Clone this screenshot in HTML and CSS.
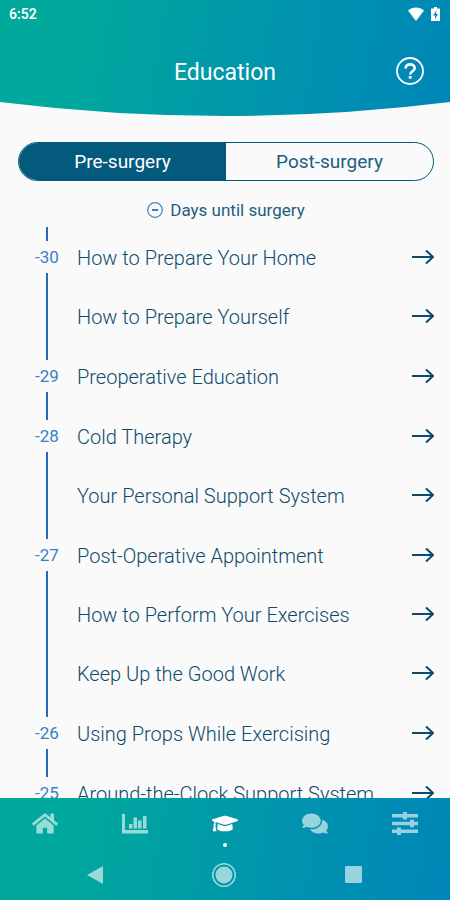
FILE: index.html
```
<!DOCTYPE html>
<html lang="en">
<head>
    <meta charset="utf-8">
    <meta name="viewport" content="width=device-width, initial-scale=1">
    <title>Education</title>
    <link rel="stylesheet" href="styles.css">
</head>
<body>
    <div class="screen">
        <!-- Header -->
        <header class="header">
            <div class="status-bar">
                <span>6:52</span>
                <span class="status-icons">
                    <svg width="18" height="14" viewBox="0 0 18 14"><path fill="#fff" d="M1 3.500C5.500-.5 12.500-.5 17 3.500L9 14z"/></svg>
                    <svg width="9" height="14" viewBox="0 0 9 14"><path fill="#fff" d="M3 0h3v1.500h3V14H0V1.500h3z"/><path fill="#0789b4" d="M5.500 3.500L2 8.500h2V12l3-5H5z"/></svg>
                </span>
            </div>
            <div class="title-bar">
                <h1>Education</h1>
                <button class="help" aria-label="Help">
                    <svg width="28" height="28" viewBox="0 0 28 28" fill="none" stroke="#fff"><circle cx="14" cy="14" r="13" stroke-width="1.800"/><path stroke-width="2.600" d="M9.600 11.400C9.600 6 18.700 6.100 18.700 11.200C18.700 14.300 14.200 14.200 14.200 17.500"/><path stroke-width="2.800" d="M14.200 19v2.700"/></svg>
                </button>
            </div>
            <svg class="curve" viewBox="0 0 450 15" preserveAspectRatio="none"><path d="M0 0Q225 28 450 0V15H0z"/></svg>
        </header>

        <!-- Content -->
        <main class="content">
            <div class="tabs">
                <button class="tab active">Pre-surgery</button>
                <button class="tab">Post-surgery</button>
            </div>

            <button class="days">
                <svg width="16" height="16" viewBox="0 0 16 16" fill="none" stroke="#3a7fc4"><circle cx="8" cy="8" r="7.300" stroke-width="1.200"/><path stroke-width="2" d="M5 8h6"/></svg>
                Days until surgery
            </button>

            <div class="timeline">
                <div class="stub"></div>
                <section class="group">
                    <div class="day">-30</div>
                    <div class="lessons">
                        <a href="#">How to Prepare Your Home <svg class="arrow" viewBox="0 0 22 16"><path d="M0 8h21M14 1.500L21 8l-7 6.500"/></svg></a>
                        <a href="#">How to Prepare Yourself <svg class="arrow" viewBox="0 0 22 16"><path d="M0 8h21M14 1.500L21 8l-7 6.500"/></svg></a>
                    </div>
                </section>
                <section class="group">
                    <div class="day">-29</div>
                    <div class="lessons">
                        <a href="#">Preoperative Education <svg class="arrow" viewBox="0 0 22 16"><path d="M0 8h21M14 1.500L21 8l-7 6.500"/></svg></a>
                    </div>
                </section>
                <section class="group">
                    <div class="day">-28</div>
                    <div class="lessons">
                        <a href="#">Cold Therapy <svg class="arrow" viewBox="0 0 22 16"><path d="M0 8h21M14 1.500L21 8l-7 6.500"/></svg></a>
                        <a href="#">Your Personal Support System <svg class="arrow" viewBox="0 0 22 16"><path d="M0 8h21M14 1.500L21 8l-7 6.500"/></svg></a>
                    </div>
                </section>
                <section class="group">
                    <div class="day">-27</div>
                    <div class="lessons">
                        <a href="#">Post-Operative Appointment <svg class="arrow" viewBox="0 0 22 16"><path d="M0 8h21M14 1.500L21 8l-7 6.500"/></svg></a>
                        <a href="#">How to Perform Your Exercises <svg class="arrow" viewBox="0 0 22 16"><path d="M0 8h21M14 1.500L21 8l-7 6.500"/></svg></a>
                        <a href="#">Keep Up the Good Work <svg class="arrow" viewBox="0 0 22 16"><path d="M0 8h21M14 1.500L21 8l-7 6.500"/></svg></a>
                    </div>
                </section>
                <section class="group">
                    <div class="day">-26</div>
                    <div class="lessons">
                        <a href="#">Using Props While Exercising <svg class="arrow" viewBox="0 0 22 16"><path d="M0 8h21M14 1.500L21 8l-7 6.500"/></svg></a>
                    </div>
                </section>
                <section class="group">
                    <div class="day">-25</div>
                    <div class="lessons">
                        <a href="#">Around-the-Clock Support System <svg class="arrow" viewBox="0 0 22 16"><path d="M0 8h21M14 1.500L21 8l-7 6.500"/></svg></a>
                    </div>
                </section>
            </div>
        </main>

        <!-- Bottom navigation -->
        <footer class="footer">
            <nav class="nav">
                <a href="#" aria-label="Home"><svg width="26" height="23" viewBox="0 0 576 512"><path d="M280.370 148.260L96 300.110V464a16 16 0 0 0 16 16l112.060-.290a16 16 0 0 0 15.920-16V368a16 16 0 0 1 16-16h64a16 16 0 0 1 16 16v95.640a16 16 0 0 0 16 16.050L464 480a16 16 0 0 0 16-16V300L295.670 148.260a12.190 12.190 0 0 0-15.300 0zM571.600 251.470L488 182.560V44.050a12 12 0 0 0-12-12h-56a12 12 0 0 0-12 12v72.610L318.470 43a48 48 0 0 0-61 0L4.340 251.470a12 12 0 0 0-1.600 16.900l25.500 31A12 12 0 0 0 45.150 301l235.220-193.740a12.190 12.190 0 0 1 15.300 0L530.900 301a12 12 0 0 0 16.900-1.600l25.500-31a12 12 0 0 0-1.700-16.930z"/></svg></a>
                <a href="#" aria-label="Progress"><svg width="26" height="20" viewBox="0 0 26 20"><path d="M0 0h3v16h23v3.500H0zM7 10h3.500v4.500H7zM11.500 3.500H15v11h-3.500zM16 6.500h3.500v8H16zM21 2h3.500v12.500H21z"/></svg></a>
                <a href="#" class="current" aria-label="Education"><svg width="26" height="21" viewBox="0 0 640 512"><path d="M622.340 153.200L343.400 67.500c-15.200-4.670-31.600-4.670-46.790 0L17.660 153.200c-23.540 7.230-23.540 38.360 0 45.590l48.630 14.940c-10.670 13.190-17.230 29.280-17.880 46.900C38.780 266.150 32 276.110 32 288c0 10.780 5.680 19.850 13.860 25.650L20.330 428.530C18.110 438.520 25.710 448 35.940 448h56.110c10.240 0 17.840-9.480 15.620-19.470L82.140 313.650C90.320 307.850 96 298.780 96 288c0-11.570-6.470-21.250-15.660-26.870.760-15.020 8.440-28.300 20.690-36.720L296.600 284.500c9.060 2.780 26.440 6.250 46.790 0l278.950-85.700c23.550-7.240 23.550-38.360 0-45.600zM352.790 315.090c-28.530 8.760-52.840 3.920-65.590 0l-145.020-44.550L128 384c0 35.350 85.960 64 192 64s192-28.650 192-64l-14.180-113.470-145.030 44.560z"/></svg></a>
                <a href="#" aria-label="Messages"><svg width="26" height="23" viewBox="0 0 576 512"><path d="M416 192c0-88.400-93.100-160-208-160S0 103.600 0 192c0 34.300 14.100 65.900 38 92-13.400 30.200-35.500 54.200-35.800 54.500-2.200 2.300-2.800 5.700-1.500 8.700S4.800 352 8 352c36.600 0 66.900-12.300 88.700-25 32.200 15.700 70.300 25 111.300 25 114.900 0 208-71.600 208-160zm122 220c23.900-26 38-57.700 38-92 0-66.900-53.500-124.200-129.300-148.100.900 6.600 1.300 13.300 1.300 20.100 0 105.900-107.700 192-240 192-10.800 0-21.300-.800-31.700-1.900C207.800 439.600 281.800 480 368 480c41 0 79.100-9.200 111.300-25 21.800 12.700 52.100 25 88.700 25 3.200 0 6.100-1.900 7.300-4.800 1.300-2.900.700-6.300-1.500-8.700-.300-.300-22.400-24.200-35.800-54.500z"/></svg></a>
                <a href="#" aria-label="Settings"><svg width="26" height="23" viewBox="0 0 26 23"><path d="M0 2h11V0h4v2h11v3.500H15v2h-4v-2H0zM0 9.800h18v-2h4v2h4v3.500h-4v2h-4v-2H0zM0 17.500h5v-2h4v2h17V21H9v2H5v-2H0z"/></svg></a>
            </nav>
            <div class="system">
                <button aria-label="Back"><svg width="16" height="18" viewBox="0 0 16 18"><path d="M16 0v18L0 9z"/></svg></button>
                <button aria-label="Home screen"><svg width="24" height="24" viewBox="0 0 24 24"><circle cx="12" cy="12" r="8.500"/><circle class="ring" cx="12" cy="12" r="11.200"/></svg></button>
                <button aria-label="Recent apps"><svg width="17" height="17" viewBox="0 0 17 17"><rect width="17" height="17" rx="1"/></svg></button>
            </div>
        </footer>
    </div>
</body>
</html>
```
FILE: styles.css
```
* {
    box-sizing: border-box;
}

body {
    margin: 0;
    background: #fafafa;
    font-family: Roboto, "Liberation Sans", sans-serif;
    color: #1c6080;
}

button {
    padding: 0;
    border: none;
    background: none;
    font: inherit;
    color: inherit;
    cursor: pointer;
}

a {
    color: inherit;
    text-decoration: none;
}

svg {
    display: block;
    flex: none;
}

.screen {
    display: flex;
    flex-direction: column;
    height: 100vh;
}

.header,
.footer {
    flex: none;
    background: linear-gradient(100deg, #00a99b 15%, #0099a9 50%, #0091b0 70%, #0086b7 100%);
    color: #fff;
}

/* Header */
.status-bar {
    display: flex;
    justify-content: space-between;
    align-items: center;
    height: 28px;
    padding: 0 10px 0 9px;
    font-size: 14px;
    font-weight: 600;
}

.status-icons {
    display: flex;
    align-items: center;
    gap: 6px;
}

.title-bar {
    display: grid;
    grid-template-columns: 28px 1fr 28px;
    align-items: center;
    height: 74px;
    padding: 14px 26px 0;
}

.title-bar h1 {
    grid-column: 2;
    margin: 0;
    font-size: 23px;
    font-weight: 400;
    text-align: center;
}

.help {
    margin-bottom: 2px;
}

.curve {
    width: 100%;
    height: 15px;
    fill: #fafafa;
}

/* Content */
.content {
    flex: 1;
    min-height: 0;
    overflow: hidden;
    padding: 25px 16px 0 18px;
}

.tabs {
    display: flex;
    height: 39px;
    border: 1px solid #045a7d;
    border-radius: 20px;
    overflow: hidden;
}

.tab {
    flex: 1;
    font-size: 19px;
}

.tab.active {
    background: #045a7d;
    color: #fff;
}

.days {
    display: flex;
    justify-content: center;
    align-items: center;
    gap: 7px;
    width: 100%;
    height: 46px;
    padding-top: 12px;
    font-size: 17px;
}

/* Timeline */
.timeline {
    display: flex;
    flex-direction: column;
    gap: 1px;
}

.stub {
    width: 2px;
    height: 14px;
    margin-left: 28px;
    background: #2968bd;
}

.group {
    display: flex;
}

.day {
    display: flex;
    flex-direction: column;
    align-items: center;
    width: 58px;
    margin-right: 1px;
    color: #3a7fc4;
    font-size: 17px;
    line-height: 31px;
}

.day::after {
    content: "";
    flex: 1;
    width: 2px;
    background: #2968bd;
}

.lessons {
    flex: 1;
}

.lessons a {
    display: flex;
    justify-content: space-between;
    height: 59px;
    color: #0d4a6c;
    font-size: 20px;
    font-weight: 300;
    line-height: 32px;
    white-space: nowrap;
}

.arrow {
    width: 22px;
    height: 16px;
    margin-top: 7px;
    fill: none;
    stroke: #0d4a70;
    stroke-width: 2;
}

/* Bottom navigation */
.nav {
    display: grid;
    grid-template-columns: repeat(5, 1fr);
    height: 51px;
}

.nav a {
    display: flex;
    flex-direction: column;
    justify-content: center;
    align-items: center;
    position: relative;
    color: rgba(255, 255, 255, 0.6);
}

.nav .current {
    color: #fff;
}

.nav .current::after {
    content: "";
    position: absolute;
    bottom: 2px;
    width: 4px;
    height: 4px;
    border-radius: 50%;
    background: #fff;
}

.nav svg,
.system svg {
    fill: currentColor;
}

.system {
    display: grid;
    grid-template-columns: repeat(3, 1fr);
    height: 51px;
    padding: 0 32px 0 30px;
    color: rgba(255, 255, 255, 0.6);
}

.system button {
    display: flex;
    justify-content: center;
    align-items: center;
}

.system .ring {
    fill: none;
    stroke: currentColor;
    stroke-width: 1.5px;
}
```
